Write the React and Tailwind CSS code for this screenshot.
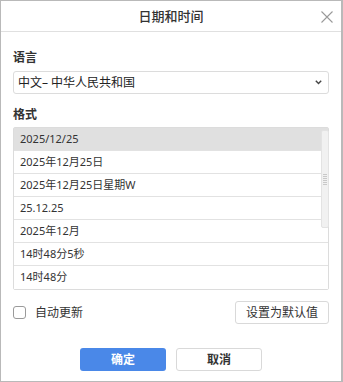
import React from "react";

const rows = [
  "2025/12/25",
  "2025年12月25日",
  "2025年12月25日星期W",
  "25.12.25",
  "2025年12月",
  "14时48分5秒",
  "14时48分",
];

export default function App() {
  return (
    <div
      className="w-[343px] h-[382px] bg-white border border-[#b9b9b9] border-r-2 flex flex-col text-[#333]"
      style={{ fontFamily: '"Noto Sans", "Noto Sans CJK SC", sans-serif' }}
    >
      <div className="relative h-[31px] shrink-0 border-b border-[#e0e0e0] flex items-center justify-center">
        <span className="text-[13px] font-medium text-[#333] leading-none">日期和时间</span>
        <svg
          className="absolute right-[8px] top-[10px]"
          width="12"
          height="12"
          viewBox="0 0 12 12"
        >
          <path d="M0.5 0.5 L11.5 11.5 M11.5 0.5 L0.5 11.5" stroke="#9a9a9a" strokeWidth="1.1" />
        </svg>
      </div>

      <div className="px-[12px] flex flex-col">
        <div className="mt-[18px] h-[16px] text-[12px] font-bold leading-[16px] text-[#333]">语言</div>
        <div className="mt-[5px] h-[23px] border border-[#dcdcdc] rounded-[3px] flex items-center justify-between pl-[4px] pr-[6px]">
          <span className="text-[12px] leading-none text-[#222]">中文– 中华人民共和国</span>
          <svg width="7" height="5" viewBox="0 0 7 5">
            <path d="M0.8 0.8 L3.5 3.6 L6.2 0.8" stroke="#444" strokeWidth="1.4" fill="none" />
          </svg>
        </div>

        <div className="mt-[13px] h-[16px] text-[12px] font-bold leading-[16px] text-[#333]">格式</div>
        <div className="relative mt-[4px] border border-[#dcdcdc] rounded-[2px] flex flex-col">
          {rows.map((r, i) => (
            <div
              key={r}
              className={
                "h-[23px] flex items-center pl-[6px] text-[11px] text-[#333] border-[#e2e2e2] " +
                (i < rows.length - 1 ? "border-b " : "h-[22px] ") +
                (i === 0 ? "bg-[#e0e0e0]" : "bg-white")
              }
            >
              {r}
            </div>
          ))}
          <div className="absolute left-[307px] top-[2px] w-[8px] h-[98px] rounded-[2px] bg-[#f1f1f1] border border-[#e3e3e3] flex flex-col items-center justify-center gap-[1px]">
            <div className="w-[4px] h-[1px] bg-[#c8c8c8]" />
            <div className="w-[4px] h-[1px] bg-[#c8c8c8]" />
            <div className="w-[4px] h-[1px] bg-[#c8c8c8]" />
            <div className="w-[4px] h-[1px] bg-[#c8c8c8]" />
            <div className="w-[4px] h-[1px] bg-[#c8c8c8]" />
            <div className="w-[4px] h-[1px] bg-[#c8c8c8]" />
          </div>
        </div>

        <div className="mt-[11px] h-[23px] flex items-center justify-between">
          <div className="flex items-center">
            <div className="w-[13px] h-[13px] border border-[#9a9a9a] rounded-[3px] bg-white" />
            <span className="ml-[9px] text-[12px] text-[#333]">自动更新</span>
          </div>
          <div className="w-[94px] h-[23px] border border-[#d9d9d9] rounded-[3px] flex items-center justify-center text-[12px] text-[#333]">
            设置为默认值
          </div>
        </div>

        <div className="mt-[24px] flex justify-center gap-[10px]">
          <div className="w-[86px] h-[23px] rounded-[3px] bg-[#4a88e8] flex items-center justify-center text-[12px] font-bold text-white">
            确定
          </div>
          <div className="w-[86px] h-[23px] rounded-[3px] border border-[#d9d9d9] bg-white flex items-center justify-center text-[12px] font-bold text-[#333]">
            取消
          </div>
        </div>
      </div>
    </div>
  );
}
